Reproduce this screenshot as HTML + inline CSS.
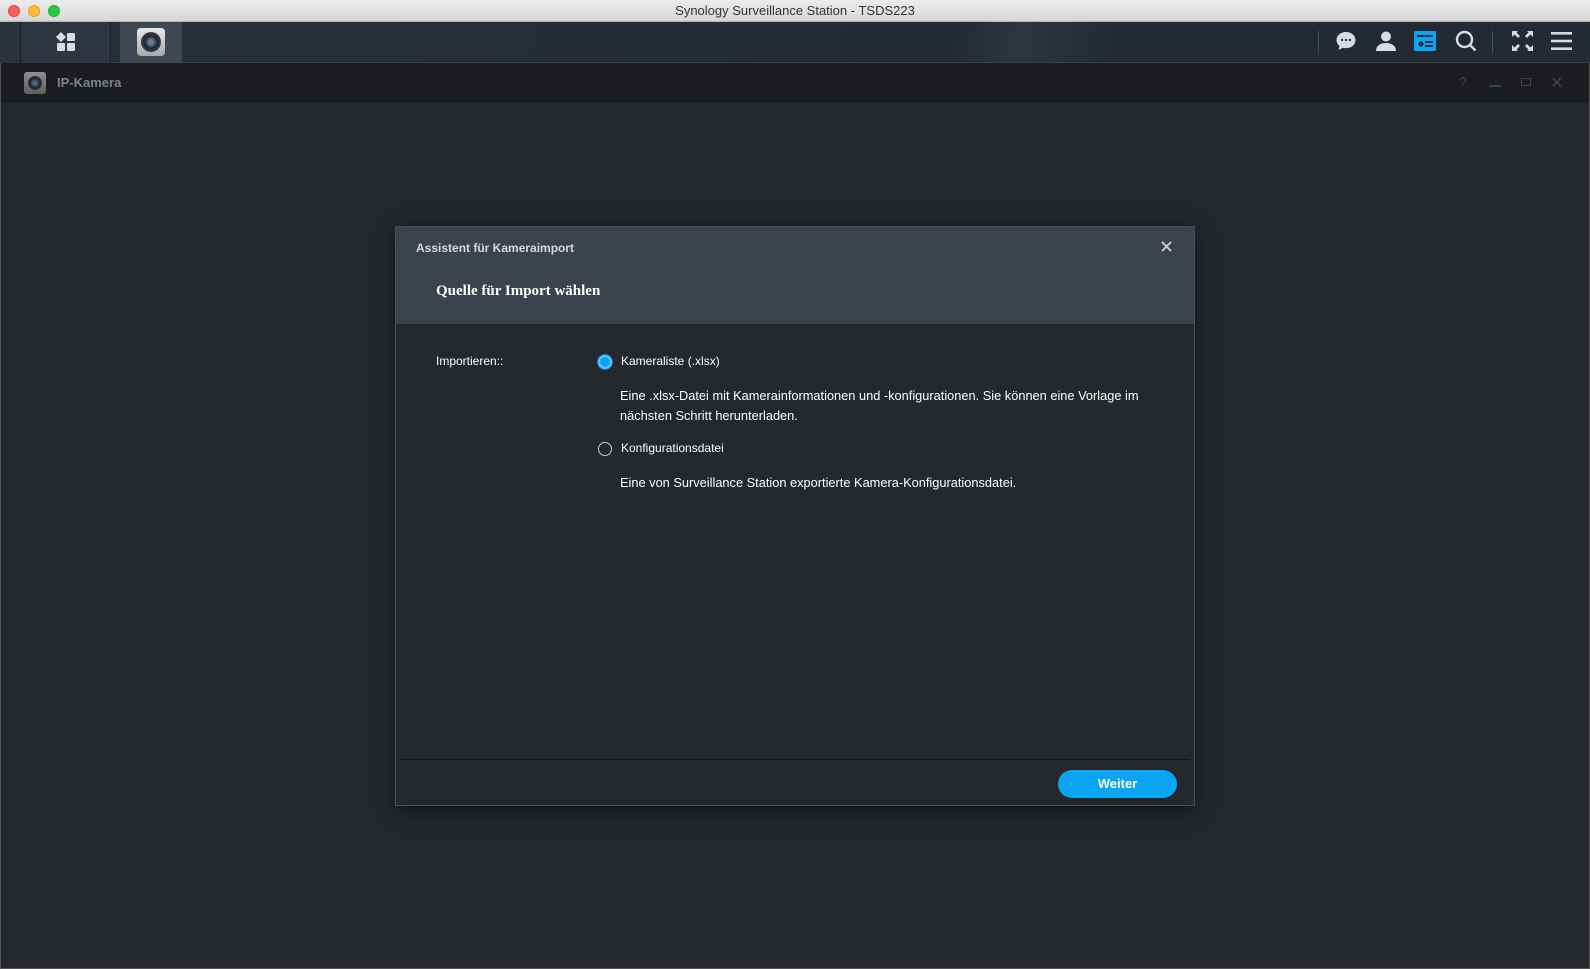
<!DOCTYPE html>
<html><head><meta charset="utf-8"><style>
*{margin:0;padding:0;box-sizing:border-box}
body{width:1590px;height:969px;overflow:hidden;background:#fff;font-family:"Liberation Sans",Arial,sans-serif;position:relative}
.titlebar{position:absolute;left:0;top:0;width:1590px;height:22px;background:linear-gradient(#ececec,#d6d6d6);border-bottom:1px solid #b5b5b5;text-align:center;font-size:13px;line-height:22px;color:#333}
.dot{position:absolute;top:5px;width:12px;height:12px;border-radius:50%}
.toolbar{position:absolute;left:0;top:22px;width:1590px;height:41px;background:linear-gradient(100deg,#28303a 0%,#232a33 60%,#2d353f 64%,#232a33 70%);border-bottom:1px solid #3b4149}
.win{position:absolute;left:0;top:63px;width:1590px;height:906px;background:#25282d;border-left:1px solid #555;border-right:1px solid #555;border-bottom:1px solid #555}
.winhead{position:absolute;left:0;top:0;width:100%;height:40px;background:#1b1d21}
.dlg{position:absolute;left:395px;top:226px;width:800px;height:580px;background:#25282d;border:1px solid #4a4f56;box-shadow:0 4px 20px rgba(0,0,0,.5)}
.dh{position:absolute;left:0;top:0;width:100%;height:97px;background:#3d434c}
.t{position:absolute;color:#fff;font-size:13px;white-space:nowrap}
.btn{position:absolute;left:662px;top:543px;width:119px;height:28px;border-radius:14px;background:#0aa4f5;color:#fff;font-size:13px;font-weight:bold;text-align:center;line-height:28px}
.icon{position:absolute}
</style></head><body>
<div class="titlebar">Synology Surveillance Station - TSDS223
<div class="dot" style="left:8px;background:#fc5f57;border:1px solid #df4744"></div>
<div class="dot" style="left:28px;background:#fdbc2e;border:1px solid #de9f34"></div>
<div class="dot" style="left:48px;background:#28c840;border:1px solid #27aa35"></div>
</div>
<div class="toolbar">
<div style="position:absolute;left:0;top:0;width:21px;height:41px;background:#2b323c;border-right:1px solid #1b2028"></div>
<div style="position:absolute;left:22px;top:0;width:89px;height:41px;background:#2e3540;border-right:1px solid #1b2028"></div>
<svg class="icon" style="left:56px;top:10px" width="20" height="20" viewBox="0 0 20 20" fill="#d8dce2"><path d="M5 0l5 5-5 5-5-5z"/><rect x="11" y="1" width="8" height="8" rx="1"/><rect x="1" y="11" width="8" height="8" rx="1"/><rect x="11" y="11" width="8" height="8" rx="1"/></svg>
<div style="position:absolute;left:120px;top:0;width:62px;height:41px;background:#3f4752"></div>
<div style="position:absolute;left:137px;top:6px;width:28px;height:28px;border-radius:4px;background:linear-gradient(#e8e8e8,#a8a8a8)"><div style="position:absolute;left:4px;top:4px;width:20px;height:20px;border-radius:50%;background:radial-gradient(circle,#6a7c90 15%,#1d2733 45%,#3a3f46 70%)"></div></div>
<div style="position:absolute;left:1318px;top:9px;width:1px;height:22px;background:#48505b"></div>
<div style="position:absolute;left:1492px;top:9px;width:1px;height:22px;background:#48505b"></div>
<svg class="icon" style="left:1335px;top:8px" width="22" height="22" viewBox="0 0 22 22"><path d="M11 2C5.5 2 1.5 5.6 1.5 10c0 2.4 1.2 4.5 3 6L3.5 20l4.5-2.3c1 .3 2 .4 3 .4 5.5 0 9.5-3.6 9.5-8S16.5 2 11 2z" fill="#d8dce2"/><circle cx="7" cy="10" r="1.2" fill="#28303a"/><circle cx="11" cy="10" r="1.2" fill="#28303a"/><circle cx="15" cy="10" r="1.2" fill="#28303a"/></svg>
<svg class="icon" style="left:1375px;top:8px" width="22" height="22" viewBox="0 0 22 22" fill="#d8dce2"><circle cx="11" cy="6.5" r="5"/><path d="M1 21c0-5 4-8 10-8s10 3 10 8z"/></svg>
<svg class="icon" style="left:1413px;top:8px" width="24" height="22" viewBox="0 0 24 22"><rect x="1" y="1" width="22" height="20" rx="1.5" fill="#0aa4f5"/><rect x="4" y="5" width="16" height="2" fill="#28303a"/><circle cx="8" cy="14" r="2.6" fill="#28303a"/><rect x="12" y="11" width="8" height="2" fill="#28303a"/><rect x="12" y="15" width="8" height="2" fill="#28303a"/></svg>
<svg class="icon" style="left:1455px;top:8px" width="22" height="22" viewBox="0 0 22 22" fill="none" stroke="#d8dce2" stroke-width="2.4"><circle cx="9.5" cy="9.5" r="7.5"/><path d="M15 15l5.5 5.5"/></svg>
<svg class="icon" style="left:1512px;top:9px" width="21" height="20" viewBox="0 0 21 20" fill="#d8dce2"><path d="M0 0h6L4.5 1.5 8 5 6 7 2.5 3.5 0 6zM21 0h-6l1.5 1.5L13 5l2 2 3.5-3.5L21 6zM0 20h6l-1.5-1.5L8 15l-2-2-3.5 3.5L0 14zM21 20h-6l1.5-1.5L13 15l2-2 3.5 3.5L21 14z"/></svg>
<svg class="icon" style="left:1551px;top:9px" width="21" height="20" viewBox="0 0 21 20" fill="#d8dce2"><rect y="1" width="21" height="2.6"/><rect y="8.7" width="21" height="2.6"/><rect y="16.4" width="21" height="2.6"/></svg>
</div>
<div class="win">
<div class="winhead">
<div style="position:absolute;left:23px;top:9px;width:22px;height:22px;border-radius:3px;background:linear-gradient(#909090,#5e5e5e)"><div style="position:absolute;left:4px;top:4px;width:14px;height:14px;border-radius:50%;background:radial-gradient(circle,#556679 15%,#1d2733 50%,#333 70%)"></div></div>
<div class="t" style="left:56px;top:12px;font-weight:bold;color:#7e838a">IP-Kamera</div>
<div class="t" style="left:1458px;top:11px;color:#40454c;font-size:14px">?</div>
<div style="position:absolute;left:1488px;top:22px;width:12px;height:1.5px;background:#40454c"></div>
<div style="position:absolute;left:1520px;top:15px;width:10px;height:8px;border:1.5px solid #40454c"></div>
<div class="t" style="left:1549px;top:10px;color:#40454c;font-size:16px">✕</div>
</div>
</div>
<div class="dlg">
<div class="dh">
<div class="t" style="left:20px;top:14px;font-size:12px;font-weight:bold;color:#d6d9dd">Assistent für Kameraimport</div>
<div class="t" style="left:40px;top:56px;font-family:'Liberation Serif',serif;font-weight:bold;font-size:15px">Quelle für Import wählen</div>
<svg class="icon" style="left:765px;top:14px" width="11" height="11" viewBox="0 0 12 12" stroke="#c8ccd2" stroke-width="2"><path d="M1 1l10 10M11 1L1 11"/></svg>
</div>
<div class="t" style="left:40px;top:127px;font-size:12px">Importieren::</div>
<div style="position:absolute;left:202px;top:128px;width:14px;height:14px;border-radius:50%;background:#0aa4f5;border:2px solid #5cc4fa;box-shadow:0 0 0 1px #0a7cc0"></div>
<div class="t" style="left:225px;top:127px;font-size:12px">Kameraliste (.xlsx)</div>
<div class="t" style="left:224px;top:159px;line-height:20px;font-size:12.8px">Eine .xlsx-Datei mit Kamerainformationen und -konfigurationen. Sie können eine Vorlage im<br>nächsten Schritt herunterladen.</div>
<div style="position:absolute;left:202px;top:215px;width:14px;height:14px;border-radius:50%;border:1px solid #c8ccd2"></div>
<div class="t" style="left:225px;top:214px;font-size:12px">Konfigurationsdatei</div>
<div class="t" style="left:224px;top:248px;font-size:12.8px">Eine von Surveillance Station exportierte Kamera-Konfigurationsdatei.</div>
<div style="position:absolute;left:4px;top:532px;width:790px;height:1px;background:#15171a"></div>
<div class="btn">Weiter</div>
</div>
</body></html>
